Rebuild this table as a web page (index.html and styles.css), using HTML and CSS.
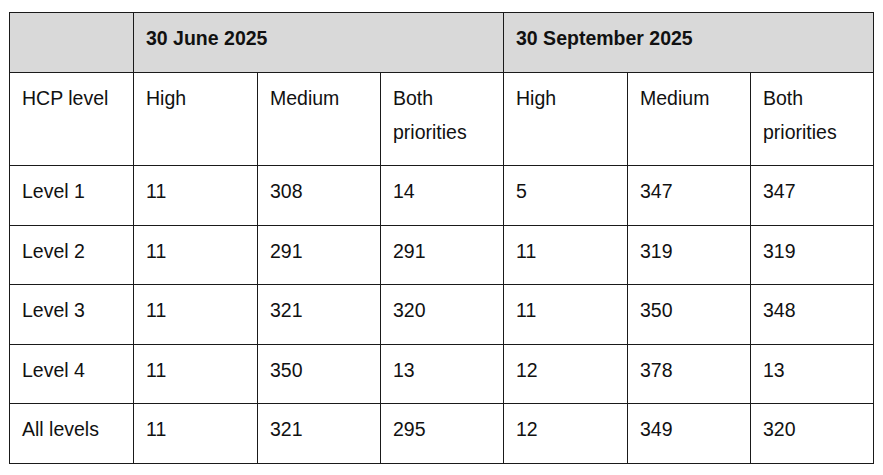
FILE: index.html
```html
<!DOCTYPE html>
<html>
<head>
<meta charset="utf-8">
<link rel="stylesheet" href="styles.css">
</head>
<body>
<div class="wrap">
<table class="data">
<colgroup>
<col class="c1"><col class="c2"><col class="c3"><col class="c4"><col class="c5"><col class="c6"><col class="c7">
</colgroup>
<thead>
<tr class="head">
<th></th>
<th colspan="3">30 June 2025</th>
<th colspan="3">30 September 2025</th>
</tr>
</thead>
<tbody>
<tr class="sub">
<td>HCP level</td><td>High</td><td>Medium</td><td>Both priorities</td><td>High</td><td>Medium</td><td>Both priorities</td>
</tr>
<tr><td>Level 1</td><td>11</td><td>308</td><td>14</td><td>5</td><td>347</td><td>347</td></tr>
<tr><td>Level 2</td><td>11</td><td>291</td><td>291</td><td>11</td><td>319</td><td>319</td></tr>
<tr><td>Level 3</td><td>11</td><td>321</td><td>320</td><td>11</td><td>350</td><td>348</td></tr>
<tr><td>Level 4</td><td>11</td><td>350</td><td>13</td><td>12</td><td>378</td><td>13</td></tr>
<tr><td>All levels</td><td>11</td><td>321</td><td>295</td><td>12</td><td>349</td><td>320</td></tr>
</tbody>
</table>
</div>
</body>
</html>
```
FILE: styles.css
```css
html, body {
  margin: 0;
  padding: 0;
  background: #ffffff;
}
.wrap {
  padding: 12px 0 0 9px;
}
.data {
  border-collapse: collapse;
  table-layout: fixed;
  width: 865px;
  font-family: "Liberation Sans", Arial, sans-serif;
  font-size: 19.5px;
  line-height: 34px;
  color: #111;
}
.c1, .c2, .c5 { width: 124px; }
.c3, .c4, .c6, .c7 { width: 123px; }
.data th, .data td {
  border: 1px solid #1a1a1a;
  padding: 8px 11px 16.5px 12px;
  text-align: left;
  vertical-align: top;
}
.head th {
  background: #d9d9d9;
  font-weight: bold;
}
```
